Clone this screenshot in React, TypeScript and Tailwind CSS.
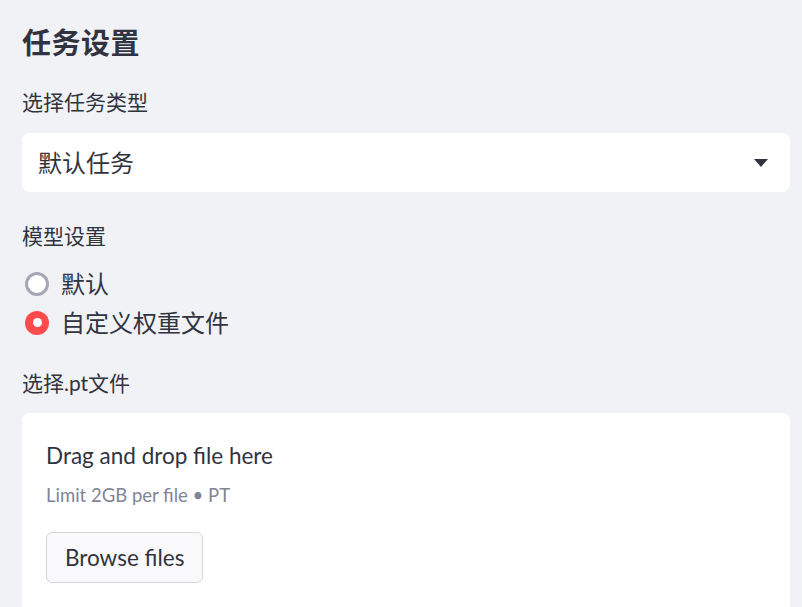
export default function App() {
  return (
    <div
      className="min-h-[607px] w-full overflow-hidden bg-[#f0f2f6] pl-[22px] pr-[12px] pt-[22px] text-[#31333f]"
      style={{ fontFamily: 'Lato, "Noto Sans CJK SC", sans-serif' }}
    >
      {/* Heading */}
      <h2 className="text-[29px] font-bold leading-[42px] tracking-[0.5px]">任务设置</h2>

      {/* Task type select */}
      <div className="mt-[24px] text-[21px] leading-[28px]">选择任务类型</div>
      <div className="mt-[17px] flex h-[59px] items-center justify-between rounded-[8px] bg-white pl-[16px] pr-[22px]">
        <span className="text-[24px]">默认任务</span>
        <svg width="14" height="8" viewBox="0 0 14 8">
          <path d="M0 0h14L7 8z" fill="#31333f" />
        </svg>
      </div>

      {/* Model settings */}
      <div className="mt-[30px] text-[21px] leading-[28px]">模型设置</div>
      <div className="mt-[21px] flex flex-col gap-[14px]">
        <label className="flex items-center gap-[12px] pl-[3px]">
          <span className="h-[24px] w-[24px] rounded-full border-[3px] border-[#a3a8b4] bg-white" />
          <span className="text-[24px] leading-[25px]">默认</span>
        </label>
        <label className="flex items-center gap-[12px] pl-[3px]">
          <span className="flex h-[24px] w-[24px] items-center justify-center rounded-full bg-[#ff4b4b]">
            <span className="h-[9px] w-[9px] rounded-full bg-white" />
          </span>
          <span className="text-[24px] leading-[25px]">自定义权重文件</span>
        </label>
      </div>

      {/* File uploader */}
      <div className="mt-[34px] text-[21px] leading-[28px]">选择.pt文件</div>
      <div className="mt-[16px] rounded-[8px] bg-white px-[24px] pb-[30px] pt-[27px]">
        <div className="text-[22.5px] leading-[32px]">Drag and drop file here</div>
        <div className="mt-[11px] text-[18.5px] leading-[24px] text-[#808495]">Limit 2GB per file • PT</div>
        <button className="mt-[25px] h-[51px] rounded-[6px] border border-[#d6d6d9] bg-[#f9f9fb] px-[18px] text-[22.5px]">
          Browse files
        </button>
      </div>
    </div>
  )
}
